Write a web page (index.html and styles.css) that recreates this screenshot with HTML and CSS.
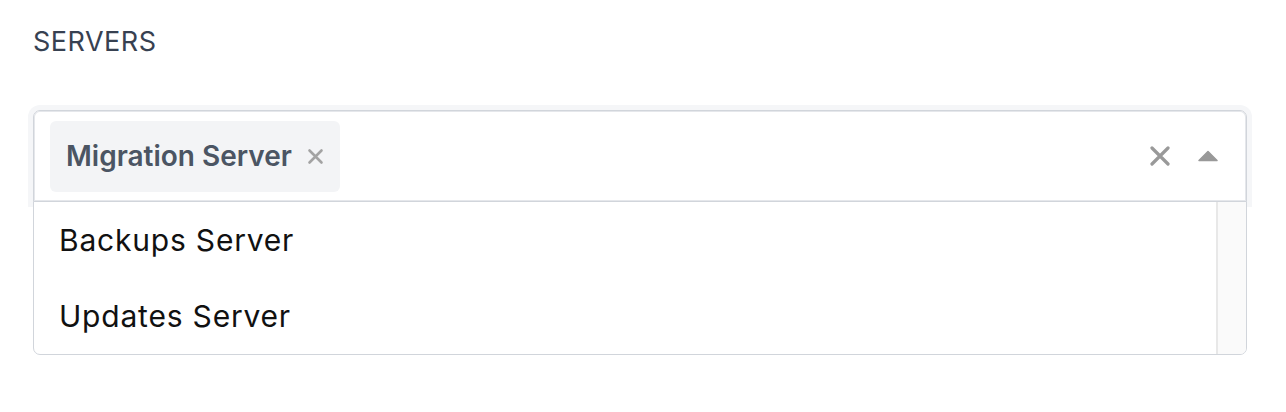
FILE: index.html
```html
<!DOCTYPE html>
<html>
<head>
<meta charset="utf-8">
<link rel="stylesheet" href="styles.css">
</head>
<body>
<div class="page">
  <div class="label">SERVERS</div>
  <div class="select">
    <div class="control">
      <div class="values">
        <div class="tag">
          <span class="tag-text">Migration Server</span>
          <svg class="tag-x" width="17" height="17" viewBox="0 0 17 17"><path d="M2.5 2.5L14.5 14.5M14.5 2.5L2.5 14.5" stroke="#a3a3a3" stroke-width="2.6" stroke-linecap="round"/></svg>
        </div>
      </div>
      <div class="indicators">
        <svg class="clear" width="20" height="20" viewBox="0 0 20 20"><path d="M2 2L18 18M18 2L2 18" stroke="#999" stroke-width="3.2" stroke-linecap="round"/></svg>
        <svg class="caret" width="20" height="12" viewBox="0 0 20 12"><path d="M10 1.5L19 10.5H1Z" fill="#999" stroke="#999" stroke-width="1.5" stroke-linejoin="round"/></svg>
      </div>
    </div>
    <div class="menu">
      <div class="options">
        <div class="option">Backups Server</div>
        <div class="option">Updates Server</div>
      </div>
      <div class="scrollbar"></div>
    </div>
  </div>
</div>
</body>
</html>
```
FILE: styles.css
```css
* { box-sizing: border-box; }
html, body { margin: 0; background: #fff; }
body { font-family: Inter, "Noto Sans", sans-serif; }
.page { padding: 26px 39px 0 33px; }
.label {
  font-size: 27px;
  letter-spacing: 0.5px;
  color: #374151;
  line-height: 32px;
}
.select { margin-top: 52px; }
.control {
  height: 92px;
  border: 1px solid #d1d5db;
  border-radius: 7px 7px 0 0;
  box-shadow: 0 0 0 5px #f5f6f8, inset 0 0 0 1px #e5e7eb;
  display: flex;
  align-items: center;
  padding: 0 0 0 16px;
}
.values { flex: 1; display: flex; }
.tag {
  display: flex;
  align-items: center;
  height: 71px;
  background: #f3f4f6;
  border-radius: 6px;
  padding: 0 16px 0 16px;
  gap: 15px;
}
.tag-text {
  font-size: 28px;
  font-weight: 600;
  color: #4b5563;
}
.tag-x { margin-top: 1px; }
.indicators {
  display: flex;
  align-items: center;
  gap: 28px;
  padding-right: 28px;
}
.caret { margin-top: -1px; }
.menu {
  position: relative;
  z-index: 1;
  margin-top: -1px;
  height: 154px;
  background: #fff;
  border: 1px solid #d1d5db;
  border-radius: 0 0 7px 7px;
  display: flex;
}
.options { flex: 1; }
.option {
  height: 76px;
  display: flex;
  align-items: center;
  padding-left: 25px;
  font-size: 30px;
  letter-spacing: 0.8px;
  color: #111;
}
.scrollbar {
  width: 30px;
  background: #fafafa;
  border-left: 2px solid #e8e8e8;
  border-bottom-right-radius: 6px;
}
```
